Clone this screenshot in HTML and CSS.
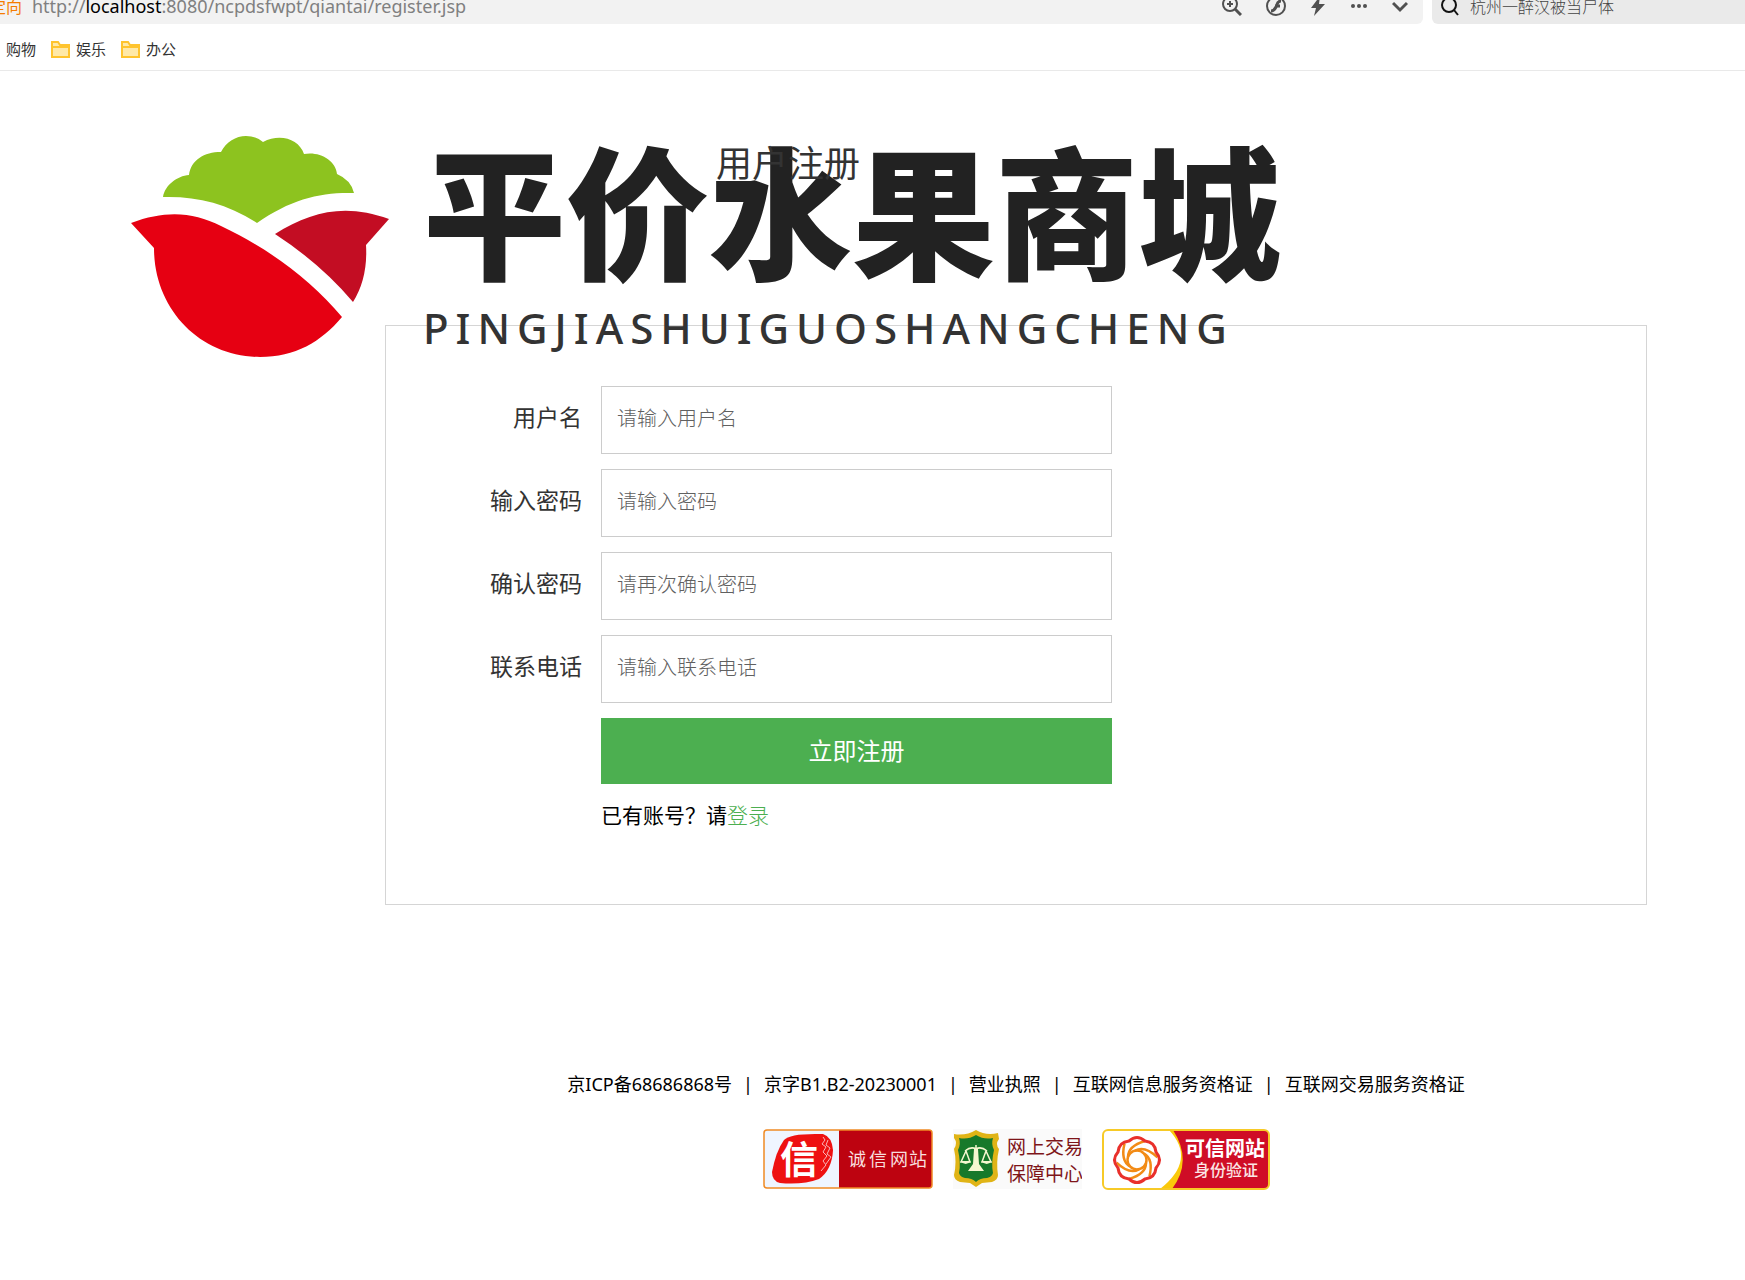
FILE: index.html
```
<!DOCTYPE html>
<html lang="zh-CN">
<head>
<meta charset="utf-8">
<title>用户注册</title>
<link rel="stylesheet" href="styles.css">
</head>
<body>
<header class="browser">
  <div class="toolbar">
    <div class="address">
      <span class="redirect">定向</span>
      <span class="url">http://<b>localhost</b>:8080/ncpdsfwpt/qiantai/register.jsp</span>
      <div class="tools">
        <button class="tool" aria-label="缩放"><svg viewBox="0 0 20 20" width="20" height="20"><circle cx="8" cy="8" r="7"/><path d="M13 13l6 6" stroke-width="3"/><path d="M5 8h6M8 5v6"/></svg></button>
        <button class="tool" aria-label="Flash"><svg viewBox="0 0 20 20" width="20" height="20"><circle cx="10" cy="10" r="9"/><path d="M15 5c-4 0-4 4-5 6s-2 4-5 4M9 10h5" stroke-width="3"/></svg></button>
        <button class="tool" aria-label="加速"><svg viewBox="0 0 16 20" width="16" height="20"><path class="solid" d="M10 0L1 12h5L4 20 15 8H9z"/></svg></button>
        <button class="tool" aria-label="更多"><svg viewBox="0 0 18 20" width="18" height="20"><g class="solid"><circle cx="3" cy="10" r="2"/><circle cx="9" cy="10" r="2"/><circle cx="15" cy="10" r="2"/></g></svg></button>
        <button class="tool" aria-label="展开"><svg viewBox="0 0 16 20" width="16" height="20"><path d="M1 7l7 7 7-7" stroke-width="3"/></svg></button>
      </div>
    </div>
    <label class="search">
      <svg viewBox="0 0 18 20" width="18" height="20"><circle cx="8" cy="9" r="7"/><path d="M13 14l4 5"/></svg>
      <input type="text" value="杭州一醉汉被当尸体" aria-label="搜索">
    </label>
  </div>
  <nav class="bookmarks">
    <a href="#">购物</a>
    <a href="#"><svg viewBox="0 0 19 17" width="19" height="17"><path class="folder" d="M1 16V1h6l2 3h9v12z"/><path class="fold" d="M1 6h17"/></svg>娱乐</a>
    <a href="#"><svg viewBox="0 0 19 17" width="19" height="17"><path class="folder" d="M1 16V1h6l2 3h9v12z"/><path class="fold" d="M1 6h17"/></svg>办公</a>
  </nav>
</header>
<main class="page">
  <div class="masthead">
    <div class="logo">
      <svg class="mark" viewBox="0 0 260 224" width="260" height="224">
        <path fill="#8dc31f" d="M32 62C34 50 46 41 58 40C60 25 73 17 90 17C95 7 105 1 115 1Q125 1 132 7C149-2 168 4 173 19C188 16 205 25 206 39Q220 45 223 58C190 57 160 64 126 88C95 68 65 61 32 62Z"/>
        <path fill="#e60012" d="M0 88C35 75 62 77 90 91C140 115 180 145 211 182C190 207 164 222 129 222C70 222 23 175 23 113Z"/>
        <path fill="#c30d23" d="M144 99C180 76 215 68 258 84L235 110Q237 143 222 167Q190 129 144 99Z"/>
      </svg>
      <div class="wordmark">
        <div class="name">平价水果商城</div>
        <div class="pinyin">PINGJIASHUIGUOSHANGCHENG</div>
      </div>
    </div>
    <h1 class="title">用户注册</h1>
  </div>
  <form class="panel">
    <label for="user">用户名</label><input id="user" type="text" placeholder="请输入用户名">
    <label for="pass">输入密码</label><input id="pass" type="password" placeholder="请输入密码">
    <label for="again">确认密码</label><input id="again" type="password" placeholder="请再次确认密码">
    <label for="phone">联系电话</label><input id="phone" type="text" placeholder="请输入联系电话">
    <button class="submit" type="button">立即注册</button>
    <p class="login">已有账号？请<a href="#">登录</a></p>
  </form>
  <footer class="footer">
    <div class="licenses"><span>京ICP备68686868号</span><span>|</span><span>京字B1.B2-20230001</span><span>|</span><span>营业执照</span><span>|</span><span>互联网信息服务资格证</span><span>|</span><span>互联网交易服务资格证</span></div>
    <div class="badges">
      <svg viewBox="0 0 170 60" width="170" height="60">
        <rect x="1" y="1" width="168" height="58" rx="3" fill="#eff5ff"/>
        <path fill="#bd0310" d="M76 1h90q3 0 3 3v52q0 3-3 3H76z"/>
        <rect x="1" y="1" width="168" height="58" rx="3" fill="none" stroke="#f08a24" stroke-width="1.5"/>
        <path fill="#ee1111" d="M21 11Q27 4 60 5Q69 8 70 21Q69 41 56 50Q40 56 17 54Q9 52 9 43Q13 22 21 11Z"/>
        <path d="M60 8l2 3-3 4 4 3-3 5 4 4-4 5 3 4-5 6M65 11l-2 5 4 3-3 6 4 3-5 7" fill="none" stroke="#f9b5b8" stroke-width="1"/>
        <text class="seal" x="17" y="44">信</text>
        <text class="honest" x="85 106 127 146" y="37">诚信网站</text>
      </svg>
      <svg viewBox="0 0 129 60" width="129" height="60">
        <path fill="#fafafa" d="M0 0h129v60H0z"/>
        <path fill="#e0b416" d="M1 5Q13 7 23 1Q33 7 45 4L46 10Q42 15 46 20Q43 33 45 46Q45 51 39 53L29 54 23 58 17 54 7 53Q1 51 1 46Q4 33 1 20Q5 14 1 9Z"/>
        <path fill="#17792a" d="M6 9Q15 11 23 6Q31 11 40 9Q38 15 41 21Q38 34 40 44Q39 48 34 49Q27 49 23 53Q19 49 12 49Q7 48 6 44Q8 34 5 21Q8 15 6 9Z"/>
        <path fill="none" stroke="#f5f7cf" stroke-width="1.5" d="M23 16v25M12 22q6-5 11-2q5-3 11 2M13 22l-5 11h9zM33 22l-4 11h9z"/>
        <path fill="#f5f7cf" d="M21 20h4l1 15 5 7H15l5-7zM7 32h11q-5 6-11 0zM28 32h11q-5 6-11 0z"/>
        <text class="trade" x="54" y="25">网上交易</text><text class="trade" x="54" y="52">保障中心</text>
      </svg>
      <svg viewBox="0 0 168 61" width="168" height="61">
        <rect x="1" y="1" width="166" height="59" rx="5" fill="#fff"/>
        <path fill="#fac90a" d="M67 1h95q5 0 5 5v49q0 5-5 5H58Q95 31 67 1z"/>
        <path fill="#cf0d26" d="M71 1h91q5 0 5 5v49q0 5-5 5H70Q91 32 71 1z"/>
        <rect x="1" y="1" width="166" height="59" rx="5" fill="none" stroke="#f7ca27" stroke-width="2"/>
        <g transform="translate(35 31)" fill="none">
          <g stroke="#f28b16" stroke-width="2.5"><circle r="9.5"/><path id="curl" d="M-9-3Q-9-14 8-19"/><use href="#curl" transform="rotate(60)"/><use href="#curl" transform="rotate(120)"/><use href="#curl" transform="rotate(180)"/><use href="#curl" transform="rotate(240)"/><use href="#curl" transform="rotate(300)"/></g>
          <path stroke="#e9302b" stroke-width="3" d="M-8-19Q0-26 8-19Q18-18 19-8Q26 0 19 8Q18 18 8 19Q0 26-8 19Q-18 18-19 8Q-26 0-19-8Q-18-18-8-19Z"/>
        </g>
        <text class="trust" x="83" y="27">可信网站</text><text class="verify" x="92" y="47">身份验证</text>
      </svg>
    </div>
  </footer>
</main>
</body>
</html>
```

FILE: styles.css
```
* { box-sizing: border-box; }
body { margin: 0; background: #fff; color: #000; font-family: "Noto Sans", "Noto Sans CJK SC", sans-serif; }
button, input { font: inherit; }
a { color: inherit; text-decoration: none; }
svg { display: block; flex: none; }

.browser { border-bottom: 1px solid #e9e9e9; overflow: hidden; }
.toolbar { display: flex; gap: 9px; height: 24px; }
.address { flex: 1; min-width: 0; display: flex; align-items: flex-end; background: #f2f2f2; border-radius: 0 0 6px 0; overflow: hidden; white-space: nowrap; }
.redirect { width: 22px; margin-right: 10px; direction: rtl; overflow: hidden; font-size: 16px; line-height: 34px; color: #f57c00; }
.url { font-size: 18px; line-height: 36px; color: #808080; }
.url b { font-weight: 400; color: #000; }
.tools { display: flex; gap: 24px; margin-left: auto; padding: 0 15px 8px 0; }
.tool { display: flex; padding: 0; border: 0; background: none; height: 20px; }
.tool svg, .search svg { fill: none; stroke: #505050; stroke-width: 2; }
.tool .solid { fill: #505050; stroke: none; }
.search { width: 313px; display: flex; align-items: flex-end; gap: 11px; padding-left: 9px; background: #eaeaea; border-radius: 0 0 0 6px; }
.search svg { stroke: #111; margin-bottom: 8px; }
.search input { flex: 1; min-width: 0; border: 0; padding: 0; background: none; font-size: 16px; font-weight: 300; height: 36px; color: #444; outline: 0; }
.bookmarks { display: flex; gap: 15px; padding: 14px 6px 10px; height: 46px; font-size: 15px; line-height: 22px; color: #333; }
.bookmarks a { display: flex; align-items: center; gap: 6px; }
.folder { fill: #ffe9a8; stroke: #ffc42e; stroke-width: 2; }
.fold { stroke: #ffc42e; stroke-width: 2; }

.page { padding: 64px 98px 80px 131px; }
.masthead { position: relative; height: 190px; }
.logo { display: flex; gap: 32px; }
.wordmark { white-space: nowrap; }
.name { font: 900 143px/144px "Noto Sans CJK SC", sans-serif; color: #222; }
.pinyin { margin-top: 21px; font-size: 42px; font-weight: 500; line-height: 56px; letter-spacing: 7px; color: #333; }
.title { position: absolute; left: 585px; top: 1px; margin: 0; font-size: 36px; font-weight: 400; line-height: 56px; color: #333; }
.panel { margin-left: 254px; border: 1px solid #d5d5d5; padding: 60px 0 73px; display: grid; grid-template-columns: 196px 511px; column-gap: 19px; row-gap: 15px; }
.panel label { text-align: right; font-size: 23px; line-height: 62px; color: #333; }
.panel input { height: 68px; border: 1px solid #ccc; border-radius: 0; padding: 0 15px 4px; font-size: 20px; font-weight: 300; background: #fff; }
.panel input::placeholder { color: #606060; opacity: 1; }
.submit { grid-column: 2; height: 66px; padding: 0 0 3px; border: 0; background: #4caf50; color: #fff; font-size: 24px; }
.login { grid-column: 2; margin: 0; font-size: 21px; line-height: 32px; }
.login a { color: #4caf50; font-weight: 300; }
.footer { margin-left: 254px; padding-top: 163px; display: flex; flex-direction: column; align-items: center; gap: 29px; }
.licenses { display: flex; gap: 11px; font-size: 18px; line-height: 32px; white-space: nowrap; }
.badges { display: flex; gap: 20px; }
.badges text { font-family: "Noto Sans CJK SC", sans-serif; }
.seal { font-size: 38px; font-weight: 700; fill: #fff; }
.honest { font-size: 18px; fill: #f8dede; }
.trade { font-size: 19px; fill: #7e1519; }
.trust { font-size: 20px; font-weight: 700; fill: #fff; }
.verify { font-size: 16px; font-weight: 500; fill: #fbe5e5; }
```
